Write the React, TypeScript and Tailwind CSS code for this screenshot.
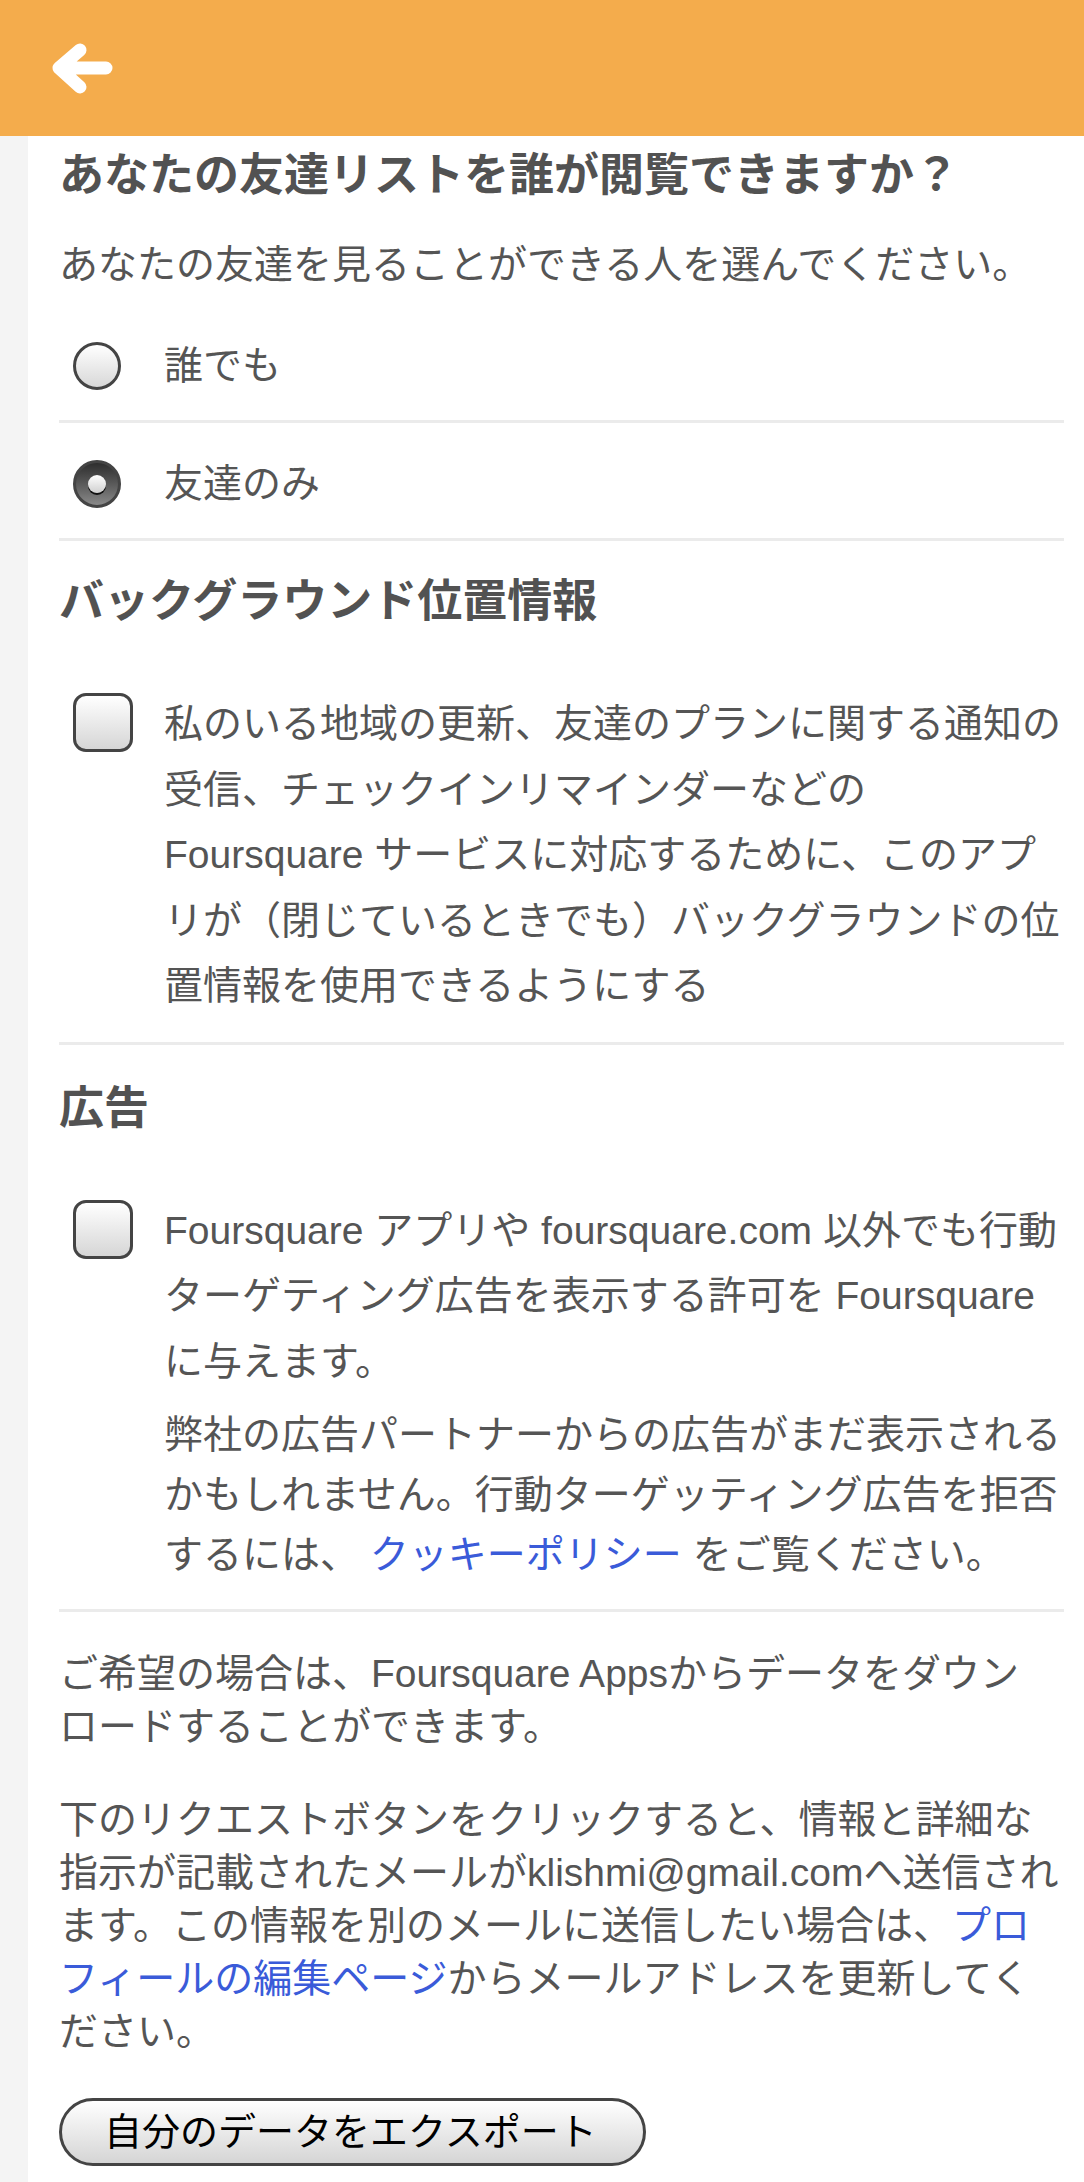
import React from "react";

const font = {
  fontFamily: '"Liberation Sans", "Noto Sans CJK JP", sans-serif',
};

function Radio({ checked }: { checked?: boolean }) {
  if (checked) {
    return (
      <div className="flex h-[48px] w-[48px] items-center justify-center rounded-full border-[3px] border-[#444] bg-gradient-to-b from-[#2e2e2e] to-[#8a8a8a]">
        <div className="h-[18px] w-[18px] rounded-full bg-gradient-to-b from-white to-[#d0d0d0] shadow-[0_2px_0_#111]" />
      </div>
    );
  }
  return (
    <div className="h-[48px] w-[48px] rounded-full border-[3px] border-[#444] bg-gradient-to-b from-white to-[#d8d8d8]" />
  );
}

function Checkbox() {
  return (
    <div className="mt-[2px] h-[59px] w-[60px] rounded-[13px] border-[3px] border-[#444] bg-gradient-to-b from-white to-[#d6d6d6]" />
  );
}

function Divider() {
  return <div className="h-[3px] w-full bg-[#ebebeb]" />;
}

function Lines({ lines }: { lines: React.ReactNode[] }) {
  return (
    <>
      {lines.map((l, i) => (
        <span key={i} className="block whitespace-nowrap">
          {l}
        </span>
      ))}
    </>
  );
}

const link = "text-[#3a5bd9]";

export default function App() {
  return (
    <div className="min-h-[2182px] w-[1084px] bg-white text-[#555]" style={font}>
      {/* ヘッダー */}
      <header className="flex h-[136px] items-center bg-[#f4ac4c] pl-[44px]">
        <svg width="77" height="64" viewBox="0 0 77 64" fill="none">
          <path
            d="M36 14 L15 32 L36 51 M15 32 L62 32"
            stroke="white"
            strokeWidth="13"
            strokeLinecap="round"
            strokeLinejoin="round"
          />
        </svg>
      </header>

      <div className="flex">
        <div className="w-[28px] shrink-0 bg-[#f4f4f4]" />

        <main className="flex-1 pl-[31px] pr-[20px] pb-[16px]">
          <h1 className="mt-[12px] text-[45px] font-bold leading-[56px] text-[#525252]">
            あなたの友達リストを誰が閲覧できますか？
          </h1>
          <p className="mt-[33px] text-[39px] leading-[56px]">
            あなたの友達を見ることができる人を選んでください。
          </p>

          <div className="mt-[12px]">
            <div className="flex items-center pt-[37px] pb-[30px]">
              <div className="w-[105px] shrink-0 pl-[14px]">
                <Radio />
              </div>
              <span className="text-[39px] leading-[48px]">誰でも</span>
            </div>
            <Divider />
            <div className="flex items-center pt-[37px] pb-[30px]">
              <div className="w-[105px] shrink-0 pl-[14px]">
                <Radio checked />
              </div>
              <span className="text-[39px] leading-[48px]">友達のみ</span>
            </div>
            <Divider />
          </div>

          <h2 className="mt-[33px] text-[45px] font-bold leading-[56px] text-[#525252]">
            バックグラウンド位置情報
          </h2>

          <div className="mt-[61px] flex pb-[23px]">
            <div className="w-[105px] shrink-0 pl-[14px]">
              <Checkbox />
            </div>
            <p className="text-[39px] leading-[65.5px]">
              <Lines
                lines={[
                  "私のいる地域の更新、友達のプランに関する通知の",
                  "受信、チェックインリマインダーなどの",
                  "Foursquare サービスに対応するために、このアプ",
                  "リが（閉じているときでも）バックグラウンドの位",
                  "置情報を使用できるようにする",
                ]}
              />
            </p>
          </div>
          <Divider />

          <h2 className="mt-[36px] text-[45px] font-bold leading-[56px] text-[#525252]">
            広告
          </h2>

          <div className="mt-[61px] flex pb-[24px]">
            <div className="w-[105px] shrink-0 pl-[14px]">
              <Checkbox />
            </div>
            <div>
              <p className="text-[39px] leading-[65.5px]">
                <Lines
                  lines={[
                    "Foursquare アプリや foursquare.com 以外でも行動",
                    "ターゲティング広告を表示する許可を Foursquare",
                    "に与えます。",
                  ]}
                />
              </p>
              <p className="mt-[11px] text-[39px] leading-[60px]">
                <Lines
                  lines={[
                    "弊社の広告パートナーからの広告がまだ表示される",
                    "かもしれません。行動ターゲッティング広告を拒否",
                    <>
                      するには、 <span className={link}>クッキーポリシー</span> をご覧ください。
                    </>,
                  ]}
                />
              </p>
            </div>
          </div>
          <Divider />

          <p className="mt-[35px] text-[39px] leading-[53px]">
            <Lines
              lines={[
                "ご希望の場合は、Foursquare Appsからデータをダウン",
                "ロードすることができます。",
              ]}
            />
          </p>

          <p className="mt-[40px] text-[39px] leading-[53px]">
            <Lines
              lines={[
                "下のリクエストボタンをクリックすると、情報と詳細な",
                "指示が記載されたメールがklishmi@gmail.comへ送信され",
                <>
                  ます。この情報を別のメールに送信したい場合は、<span className={link}>プロ</span>
                </>,
                <>
                  <span className={link}>フィールの編集ページ</span>からメールアドレスを更新してく
                </>,
                "ださい。",
              ]}
            />
          </p>

          <button className="mt-[40px] flex h-[68px] w-[587px] items-center rounded-full border-[3px] border-[#444] bg-gradient-to-b from-white to-[#d5d5d5] pl-[42px] text-[38px] leading-none text-black">
            自分のデータをエクスポート
          </button>
        </main>
      </div>
    </div>
  );
}
